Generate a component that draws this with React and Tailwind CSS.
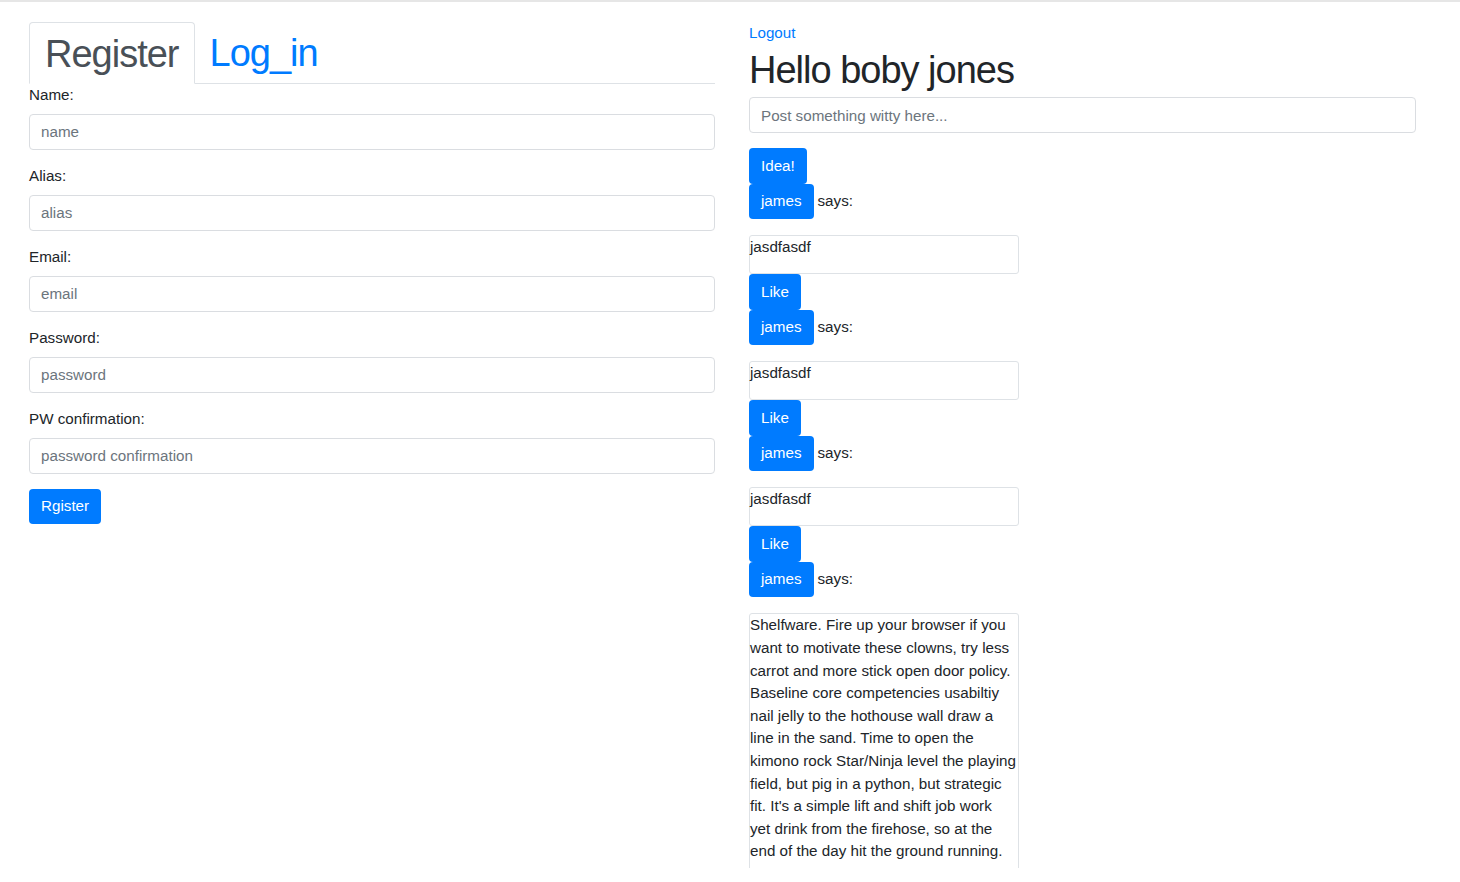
import React from "react";

const posts = [
  { author: "james", lines: ["jasdfasdf"] },
  { author: "james", lines: ["jasdfasdf"] },
  { author: "james", lines: ["jasdfasdf"] },
  {
    author: "james",
    lines: [
      "Shelfware. Fire up your browser if you",
      "want to motivate these clowns, try less",
      "carrot and more stick open door policy.",
      "Baseline core competencies usabiltiy",
      "nail jelly to the hothouse wall draw a",
      "line in the sand. Time to open the",
      "kimono rock Star/Ninja level the playing",
      "field, but pig in a python, but strategic",
      "fit. It's a simple lift and shift job work",
      "yet drink from the firehose, so at the",
      "end of the day hit the ground running.",
    ],
  },
];

const fields = [
  { label: "Name:", placeholder: "name", type: "text" },
  { label: "Alias:", placeholder: "alias", type: "text" },
  { label: "Email:", placeholder: "email", type: "email" },
  { label: "Password:", placeholder: "password", type: "password" },
  { label: "PW confirmation:", placeholder: "password confirmation", type: "password" },
];

const Btn = ({ children }) => (
  <button className="inline-flex items-center h-[35.5px] bg-[#007bff] text-white rounded-[4px] px-[12px] text-[15.2px] leading-[22.5px]">
    {children}
  </button>
);

const App = () => {
  return (
    <div
      className="bg-white text-[#212529] text-[15.2px] leading-[22.5px]"
      style={{ fontFamily: '"Liberation Sans", Arial, sans-serif' }}
    >
      <div className="h-[2px] bg-[#e6e6e6]" />
      <div className="h-[866px] overflow-hidden">
        <div className="flex pl-[29px] pt-[20px]">
          {/* Left: register form */}
          <div className="w-[686px]">
            <div className="flex border-b border-[#dee2e6]">
              <div className="-mb-px border border-[#dee2e6] border-b-white bg-white rounded-t-[4px] px-[15px] pt-[9px] pb-[5px] text-[38px] leading-[45.6px] tracking-[-1px] text-[#495057]">
                Register
              </div>
              <a className="px-[15px] pt-[9px] pb-[5px] text-[38px] leading-[45.6px] tracking-[-1px] text-[#007bff]">
                Log_in
              </a>
            </div>
            <form>
              {fields.map((f) => (
                <div key={f.label} className="mb-[15px]">
                  <label className="block mb-[7.5px]">{f.label}</label>
                  <input
                    type={f.type}
                    placeholder={f.placeholder}
                    className="block w-full h-[36px] px-[11px] border border-[#dadde1] rounded-[4px] outline-none placeholder:text-[#6c757d]"
                  />
                </div>
              ))}
              <Btn>Rgister</Btn>
            </form>
          </div>

          {/* Right: feed */}
          <div className="w-[667px] ml-[34px]">
            <a className="block text-[#007bff]">Logout</a>
            <h1 className="mt-[3px] mb-[4px] text-[38px] leading-[45.6px] tracking-[-1px]">Hello boby jones</h1>
            <input
              placeholder="Post something witty here..."
              className="block w-full h-[36px] px-[11px] border border-[#dadde1] rounded-[4px] outline-none placeholder:text-[#6c757d] mb-[15px]"
            />
            <Btn>Idea!</Btn>
            {posts.map((p, i) => (
              <div key={i}>
                <p className="mb-[16px] flex items-center">
                  <Btn>{p.author}</Btn>
                  <span className="ml-[4px]">says:</span>
                </p>
                <div className="w-[270px] border border-[#dee2e6] rounded-[3px]">
                  <p className="mb-[14.5px] leading-[22.6px]">
                    {p.lines.map((l, j) => (
                      <span key={j} className="block whitespace-nowrap">{l}</span>
                    ))}
                  </p>
                </div>
                {i < posts.length - 1 && <Btn>Like</Btn>}
              </div>
            ))}
          </div>
        </div>
      </div>
    </div>
  );
};

export default App;
